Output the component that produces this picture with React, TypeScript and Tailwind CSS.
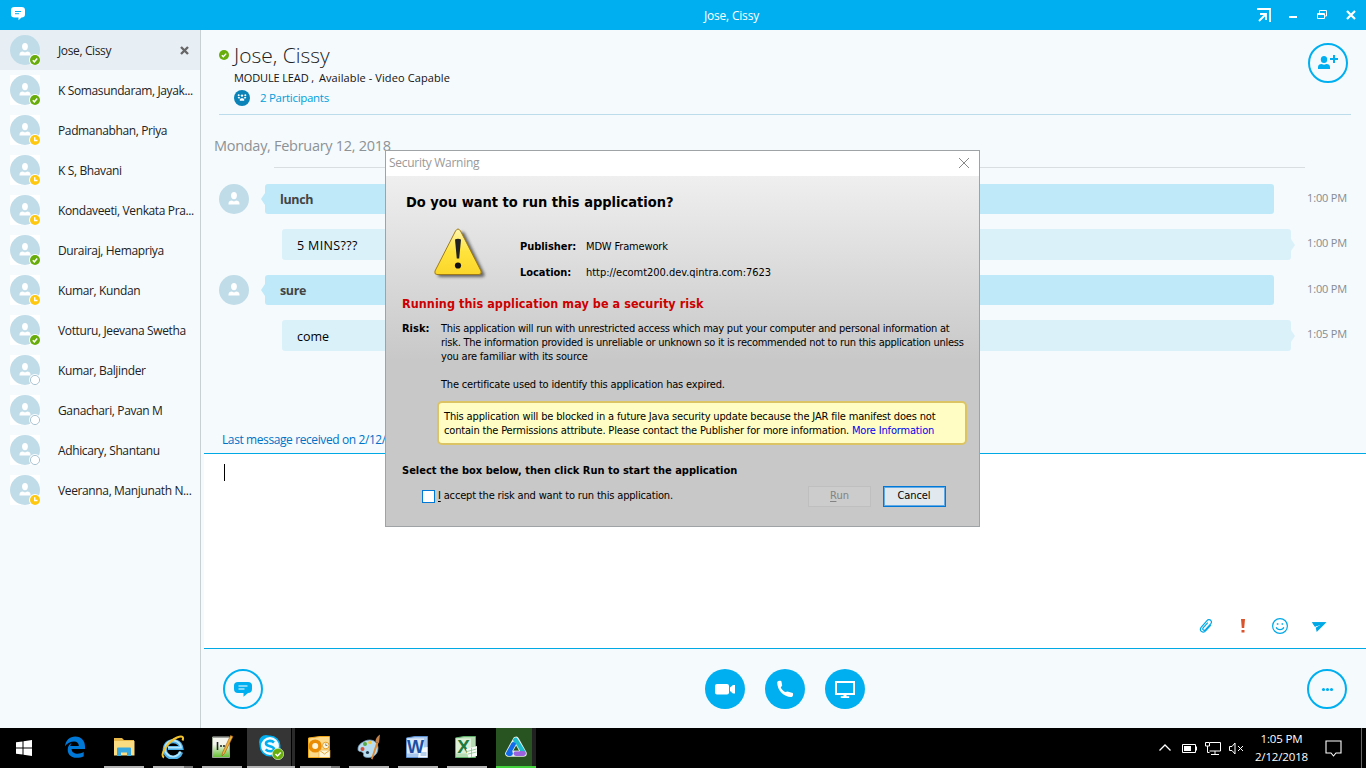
import React from "react";

type Status = "on" | "away" | "off";

const contacts: { name: string; status: Status }[] = [
  { name: "Jose, Cissy", status: "on" },
  { name: "K Somasundaram, Jayak...", status: "on" },
  { name: "Padmanabhan, Priya", status: "away" },
  { name: "K S, Bhavani", status: "away" },
  { name: "Kondaveeti, Venkata Pra...", status: "away" },
  { name: "Durairaj, Hemapriya", status: "on" },
  { name: "Kumar, Kundan", status: "away" },
  { name: "Votturu, Jeevana Swetha", status: "on" },
  { name: "Kumar, Baljinder", status: "off" },
  { name: "Ganachari, Pavan M", status: "off" },
  { name: "Adhicary, Shantanu", status: "off" },
  { name: "Veeranna, Manjunath N...", status: "away" },
];

function Avatar({ status, square }: { status?: Status; square?: boolean }) {
  return (
    <svg width="30" height="30" viewBox="0 0 30 30" className="shrink-0">
      {square && <rect width="30" height="30" fill="#fff" />}
      <circle cx="15" cy="15" r="15" fill="#c0dce8" />
      <ellipse cx="15" cy="11.6" rx="2.9" ry="3.6" fill="#fff" />
      <path d="M9.5 20.5v-1.2c0-1.7 1.4-2.8 3.4-2.8l2.1.9 2.1-.9c2 0 3.4 1.1 3.4 2.8v1.2z" fill="#fff" />
      {status && <circle cx="25" cy="25" r="6" fill="#fff" />}
      {status === "on" && (
        <>
          <circle cx="25" cy="25" r="5" fill="#68ad0c" />
          <path d="M22.8 25.3l1.5 1.5 2.9-3.2" fill="none" stroke="#fff" strokeWidth="1.5" />
        </>
      )}
      {status === "away" && (
        <>
          <circle cx="25" cy="25" r="5" fill="#fdc80f" />
          <path d="M24.7 22.2v3.3h2.8" fill="none" stroke="#fff" strokeWidth="1.4" />
        </>
      )}
      {status === "off" && <circle cx="25" cy="25" r="4.6" fill="#fff" stroke="#a9c4d2" />}
    </svg>
  );
}

function Sidebar() {
  return (
    <aside className="flex w-[201px] shrink-0 flex-col border-r border-[#c9d0d4] bg-[#f5fafd]">
      {contacts.map((c, i) => (
        <div key={c.name} className={i === 0 ? "flex h-10 items-center bg-[#e7eff5] pl-2.5" : "flex h-10 items-center pl-2.5"}>
          <Avatar status={c.status} square={i > 0} />
          <span className="ml-[18px] w-[127px] shrink-0 whitespace-nowrap pt-px text-[12px] tracking-[-0.37px] text-[#222]">{c.name}</span>
          {i === 0 && (
            <svg width="9" height="9" viewBox="0 0 9 9" className="-ml-[5px] shrink-0">
              <path d="M1 1l7 7M8 1L1 8" stroke="#666" strokeWidth="2.4" />
            </svg>
          )}
        </div>
      ))}
    </aside>
  );
}

function TitleBar() {
  return (
    <header className="flex h-[30px] shrink-0 items-center bg-[#00aff0] text-white">
      <svg width="14" height="14" viewBox="0 0 14 14" className="-mt-[3px] ml-[11px]">
        <path d="M3.5 0h7Q14 0 14 3.2v4Q14 10.4 10.5 10.5L7.5 13.2V10.5h-4Q0 10.5 0 7.2v-4Q0 0 3.5 0z" fill="#fff" />
        <path d="M4 4.5h6M4 6.7h4" stroke="#00aff0" />
      </svg>
      <div className="w-[679px]" />
      <div className="flex-1 whitespace-nowrap pt-0.5 text-[12px] tracking-[-0.2px]">Jose, Cissy</div>
      <svg width="109" height="30" viewBox="0 0 109 30" className="shrink-0" fill="none" stroke="#fff">
        <path d="M0 9h13v13M3 14h6v6M9 14l-7 7" strokeWidth="1.8" />
        <path d="M32 17h8" strokeWidth="2" />
        <path d="M60.5 13.5h7v5h-7zM60.5 14.5h7M62.5 13v-2.5h7v5.5h-2" />
        <path d="M90 11l8 8M98 11l-8 8" strokeWidth="2.2" />
      </svg>
    </header>
  );
}

function ChatHeader() {
  return (
    <div className="ml-[18px] mr-[15px] flex h-[85px] shrink-0 border-b border-[#bcdceb]">
      <svg width="10" height="10" viewBox="0 0 10 10" className="mt-5 shrink-0">
        <circle cx="5" cy="5" r="5" fill="#68ad0c" />
        <path d="M2.8 5.3l1.5 1.5 2.9-3.2" fill="none" stroke="#fff" strokeWidth="1.4" />
      </svg>
      <div className="ml-[5px] flex-1 whitespace-nowrap pt-[11px]">
        <div className="h-[29px] text-[21px] font-light leading-[29px] text-[#222]">Jose, Cissy</div>
        <div className="flex h-4 items-center gap-[5px] text-[11px] text-[#111]">
          <span className="tracking-[-0.13px]">MODULE LEAD ,</span>
          <span className="tracking-[0.1px]">Available - Video Capable</span>
        </div>
        <div className="mt-1 flex h-4 items-center">
          <svg width="16" height="16" viewBox="0 0 16 16">
            <circle cx="8" cy="8" r="8" fill="#0a83b8" />
            <g fill="#fff">
              <circle cx="4.7" cy="5.3" r="1" />
              <circle cx="8" cy="5.6" r="1.2" />
              <circle cx="11.3" cy="5.3" r="1" />
              <path d="M3.6 7h2.2v1.5H4.4zM10.2 7h2.2l-.8 1.5h-1.4zM5.8 10.8V9.2l1.2-.9h2l1.2.9v1.600z" />
            </g>
          </svg>
          <span className="ml-2.5 text-[11.5px] tracking-[-0.3px] text-[#009fdb]">2 Participants</span>
        </div>
      </div>
      <svg width="40" height="40" viewBox="0 0 40 40" className="mr-[3px] mt-[13px] shrink-0">
        <circle cx="20" cy="20" r="19" fill="none" stroke="#00aff0" strokeWidth="2" />
        <ellipse cx="16" cy="16.5" rx="3.2" ry="3.6" fill="#00aff0" />
        <path d="M10 26v-2c0-2 1.5-3 3.5-3l2.5.7 2.5-.7c2 0 3.500 1 3.500 3v2z" fill="#00aff0" />
        <path d="M22 16h8M26 12v8" stroke="#00aff0" strokeWidth="2" />
      </svg>
    </div>
  );
}

function Incoming({ text, time }: { text: string; time: string }) {
  return (
    <div className="flex h-[30px] items-center">
      <Avatar />
      <svg width="4" height="12" viewBox="0 0 4 12" className="ml-3">
        <path d="M4 0v12L0 6z" fill="#bfe9f9" />
      </svg>
      <div className="flex h-[30px] w-[1009px] items-center rounded-[3px] bg-[#bfe9f9] pl-[15px] pt-0.5 text-[12.5px] font-bold tracking-[-0.35px] text-[#444]">
        {text}
      </div>
      <span className="ml-[33px] whitespace-nowrap pb-px text-[11px] tracking-[-0.15px] text-[#858c91]">{time}</span>
    </div>
  );
}

function Outgoing({ text, time, wide }: { text: string; time: string; wide?: boolean }) {
  return (
    <div className="flex h-[31px] items-center pl-[63px]">
      <div className="flex h-[31px] w-[1009px] items-center rounded-[3px] bg-[#dbf1fa] pl-[15px] pt-[3px] text-[12.5px] text-black">
        <span className={wide ? "tracking-[0.35px]" : ""}>{text}</span>
      </div>
      <svg width="4" height="12" viewBox="0 0 4 12">
        <path d="M0 0v12L4 6z" fill="#dbf1fa" />
      </svg>
      <span className="ml-3 whitespace-nowrap pb-0.5 text-[11px] tracking-[-0.15px] text-[#858c91]">{time}</span>
    </div>
  );
}

function Conversation() {
  return (
    <div className="flex h-[338px] shrink-0 flex-col pl-[18px]">
      <div className="-ml-[5px] mt-[21px] h-5 whitespace-nowrap text-[14.5px] leading-5 tracking-[-0.29px] text-[#8c9296]">Monday, February 12, 2018</div>
      <div className="ml-[55px] mr-[61px] mt-[11px] h-px bg-[#d9dee1]" />
      <div className="mt-4 flex flex-col gap-[15px]">
        <Incoming text="lunch" time="1:00 PM" />
        <Outgoing text="5 MINS???" time="1:00 PM" wide />
        <Incoming text="sure" time="1:00 PM" />
        <Outgoing text="come" time="1:05 PM" />
      </div>
      <div className="mb-[5px] ml-[3px] mt-auto h-4 whitespace-nowrap text-[12px] leading-4 tracking-[-0.4px] text-[#0072c6]">
        Last message received on 2/12/2018 at 1:05 PM.
      </div>
    </div>
  );
}

function Compose() {
  return (
    <div className="ml-[3px] flex h-[196px] shrink-0 flex-col justify-between border-y border-[#00a8e4] bg-white">
      <div className="ml-5 mt-[10px] h-[17px] w-px bg-black" />
      <div className="mb-[13px] flex h-[18px] items-center justify-end pr-[39px]">
        <svg width="14" height="16" viewBox="0 0 14 16" fill="none" stroke="#00a8e6" strokeWidth="1.2">
          <path d="M11.8 7.2l-5 5.5c-1 1.2-2.6 1.9-4.2.9-1.7-1.3-1.5-3-.5-4.3L8 2.6c1-1.1 2.6-1.3 3.7-.3 1.1 1.1.9 2.5 0 3.6l-5.2 5.7c-.7.7-1.7.8-2.3.2-.6-.6-.5-1.4.1-2.1l4.5-5" />
        </svg>
        <svg width="4" height="14" viewBox="0 0 4 14" className="ml-[28px]" fill="#d9532c">
          <path d="M0 0h4l-.8 9H.8zM.5 11h3v2.5h-3z" />
        </svg>
        <svg width="16" height="16" viewBox="0 0 16 16" className="ml-[27px]" fill="none" stroke="#00a8e6">
          <circle cx="8" cy="8" r="7.4" strokeWidth="1.2" />
          <path d="M4.2 9.3c1 3 6.600 3 7.600 0" strokeWidth="1.2" />
          <path d="M4.8 6h1.6M9.6 6h1.6" strokeWidth="1.6" />
        </svg>
        <svg width="15" height="12" viewBox="0 0 15 12" className="ml-6 mt-px" fill="#00a8e6">
          <path d="M0 1.2h14.5L4.7 11 3.7 6.8 8.5 3.7 2.8 5.5z" />
          <path d="M0 1.2h14.5L3 5.8z" />
        </svg>
      </div>
    </div>
  );
}

function CallBar() {
  return (
    <div className="flex h-[79px] shrink-0 items-center pl-[22px] pr-[19px]">
      <svg width="40" height="40" viewBox="0 0 40 40">
        <circle cx="20" cy="20" r="19" fill="none" stroke="#00aff0" strokeWidth="2" />
        <path d="M15 13h10q4 0 4 3.5V20q0 4-4 4l-4.500 3.800V24H15q-4 0-4-4v-3.500Q11 13 15 13z" fill="#00aff0" />
        <path d="M15.500 17h9M15.500 20h6" stroke="#fff" strokeWidth="1.2" />
      </svg>
      <div className="ml-[442px] flex gap-5">
        <svg width="40" height="40" viewBox="0 0 40 40" fill="#fff">
          <circle cx="20" cy="20" r="20" fill="#00aff0" />
          <rect x="10" y="15" width="14" height="10.5" rx="2" />
          <path d="M25 18.500l3-2.500h2v8.500h-2L25 22z" />
        </svg>
        <svg width="40" height="40" viewBox="0 0 40 40">
          <circle cx="20" cy="20" r="20" fill="#00aff0" />
          <path d="M12.200 13c1-1.200 2.600-1.400 4.200-.8l.8 4.400-1.500 1.800c1.100 2.200 2.800 3.800 5 4.700l1.700-.7 5.400 1.600c.6 1.500.3 3-.8 3.900-7 .8-15-6-14.800-14.900z" fill="#fff" />
        </svg>
        <svg width="40" height="40" viewBox="0 0 40 40">
          <circle cx="20" cy="20" r="20" fill="#00aff0" />
          <path d="M11 13h18v12H11z" fill="none" stroke="#fff" strokeWidth="2" />
          <path d="M18.500 26h3v1.200h2.700V29h-8.400v-1.800h2.700z" fill="#fff" />
        </svg>
      </div>
      <svg width="40" height="40" viewBox="0 0 40 40" className="ml-auto">
        <circle cx="20" cy="20" r="19" fill="none" stroke="#00aff0" strokeWidth="2" />
        <g fill="#00aff0">
          <circle cx="16.5" cy="20.5" r="1.6" />
          <circle cx="20.5" cy="20.5" r="1.6" />
          <circle cx="24.5" cy="20.5" r="1.6" />
        </g>
      </svg>
    </div>
  );
}

function SecurityDialog() {
  return (
    <div className="absolute left-[385px] top-[150px] flex h-[377px] w-[595px] flex-col border border-[#9fa3a5] bg-white text-black">
      <div className="flex h-[25px] shrink-0 items-center justify-between pb-px pl-[3px] pr-[9px] text-[12px] text-[#999]">
        <span className="tracking-[-0.28px]">Security Warning</span>
        <svg width="12" height="12" viewBox="0 0 12 12" stroke="#888">
          <path d="M1 1l10 10M11 1L1 11" />
        </svg>
      </div>
      <div className="flex flex-1 flex-col whitespace-nowrap bg-[linear-gradient(#efefef_0px,#c8c8c8_185px,#c8c8c8_100%)] pl-4 pr-3 font-['DejaVu_Sans_Condensed','DejaVu_Sans',sans-serif] text-[11px] leading-[14px] [font-stretch:condensed]">
        <h1 className="ml-1 mt-4 h-5 text-[14.5px] font-bold leading-5">Do you want to run this application?</h1>
        <div className="mt-4 flex h-[52px]">
          <svg width="54" height="52" viewBox="0 0 54 52" className="ml-8">
            <defs>
              <linearGradient id="warn" x1="0" y1="0" x2="0" y2="1">
                <stop offset="0" stopColor="#fff6b0" />
                <stop offset="0.5" stopColor="#ffe33c" />
                <stop offset="1" stopColor="#fbd62a" />
              </linearGradient>
              <filter id="soft" x="-20%" y="-20%" width="140%" height="140%">
                <feGaussianBlur stdDeviation="1.5" />
              </filter>
            </defs>
            <path d="M26 5q3-3 5 1l19 39q2 4-3 4H7q-4 0-3-3z" fill="#333" opacity="0.7" filter="url(#soft)" />
            <path d="M21.500 3q2.500-4 5 0L47 43q1 3.500-2 3.500H3q-3 0-2-3.500z" fill="url(#warn)" stroke="#a07b16" />
            <path d="M21 11.500q3-1.500 6 0l-1.800 19h-2.400z" fill="#222" />
            <circle cx="24" cy="37.500" r="3.1" fill="#111" />
          </svg>
          <div className="ml-8 flex w-[66px] flex-col gap-3 pt-[12px] font-bold tracking-[-0.05px]">
            <span>Publisher:</span>
            <span>Location:</span>
          </div>
          <div className="flex flex-col gap-3 pt-[12px]">
            <span className="tracking-[-0.15px]">MDW Framework</span>
            <span className="tracking-[-0.03px]">http://ecomt200.dev.qintra.com:7623</span>
          </div>
        </div>
        <div className="mt-[16px] h-4 text-[12.5px] font-bold leading-4 tracking-[0.06px] text-[#cc0000]">Running this application may be a security risk</div>
        <div className="mt-2.5 flex">
          <span className="w-[39px] shrink-0 font-bold">Risk:</span>
          <div className="flex flex-col">
            <span className="tracking-[-0.245px]">This application will run with unrestricted access which may put your computer and personal information at</span>
            <span className="tracking-[-0.245px]">risk. The information provided is unreliable or unknown so it is recommended not to run this application unless</span>
            <span className="tracking-[-0.2px]">you are familiar with its source</span>
            <span className="mt-3.5 tracking-[-0.175px]">The certificate used to identify this application has expired.</span>
          </div>
        </div>
        <div className="ml-[35px] mt-[9px] h-[44px] w-[530px] rounded-[5px] border-2 border-[#dcc464] bg-[#fffdc4] pl-[5px] pt-[7px]">
          <div className="tracking-[-0.155px]">This application will be blocked in a future Java security update because the JAR file manifest does not</div>
          <div className="tracking-[-0.17px]">
            contain the Permissions attribute. Please contact the Publisher for more information. <a className="text-[#0000ee]">More Information</a>
          </div>
        </div>
        <div className="mt-[19px] font-bold">Select the box below, then click Run to start the application</div>
        <div className="mt-[7px] flex h-[22px] items-center pl-5">
          <span className="size-[13px] border border-[#0078d7] bg-white" />
          <span className="ml-[3px] w-[370px] tracking-[-0.17px]">
            <u className="underline-offset-2">I</u> accept the risk and want to run this application.
          </span>
          <button className="h-[21px] w-[63px] border border-[#bfbfbf] bg-[#cccccc] text-[#838383]">
            <u className="underline-offset-2">R</u>un
          </button>
          <button className="ml-3 h-[21px] w-[63px] border border-[#0078d7] bg-[#e1e8ee] pr-px tracking-[-0.1px] shadow-[inset_0_0_0_1px_#62abe6]">
            Cancel
          </button>
        </div>
      </div>
    </div>
  );
}

function TaskItem({ children, split }: { children: React.ReactNode; split?: boolean }) {
  return (
    <div className="ml-[9px] flex h-10 w-10 shrink-0 flex-col">
      <div className="flex h-[38px] items-center justify-center">{children}</div>
      <div className="flex h-0.5">
        <div className="flex-1 bg-[#b5b5b5]" />
        {split && <div className="w-[9px] bg-[#777]" />}
      </div>
    </div>
  );
}

function Taskbar() {
  return (
    <footer className="flex h-10 shrink-0 bg-black text-white">
      <div className="flex w-12 items-center justify-center">
        <svg width="16" height="16" viewBox="0 0 16 16" fill="#fff">
          <path d="M0 2.300L6.500 1.400v6.100H0zM7.500 1.200L16 0v7.500H7.500zM0 8.500h6.500v6.100L0 13.700zM7.500 8.500H16V16l-8.500-1.200z" />
        </svg>
      </div>
      <div className="ml-[7px] flex h-[38px] w-10 items-center justify-center">
        <svg width="20" height="22" viewBox="0 0 20 22" fill="#0078d7">
          <path d="M0 10.200C.8 4 4.800.5 10.200.5 16.500.5 20 5 20 10.500V13H6.500c.2 3.200 2.800 4.700 6 4.700 2.300 0 4.300-.6 6.200-1.700v4.200c-2 1.100-4.400 1.600-7 1.600-5.500 0-9-3.300-9-8.100 0-3.300 1.800-5.900 4.600-7.200C6 7.600 5.500 8.700 5.400 10h8.400c0-3-1.700-4.600-4.800-4.600C5.600 5.400 2 7.200 0 10.200z" />
        </svg>
      </div>
      <TaskItem>
        <svg width="22" height="20" viewBox="0 0 22 20">
          <path d="M1 1h8l2 2h10v15H1z" fill="#e8b84a" />
          <path d="M1 4h20.500v14.500H1z" fill="#fbdc80" />
          <path d="M4 19v-7.500q0-1 1-1h12q1 0 1 1V19h-4v-3.500H8V19z" fill="#38a9e0" />
        </svg>
      </TaskItem>
      <TaskItem split>
        <svg width="24" height="24" viewBox="0 0 24 24" fill="none">
          <path d="M20 17A8.300 8.300 0 1 1 20.300 13H7" stroke="#4fb3e9" strokeWidth="4.2" />
          <path d="M19.500 16.500A8 8 0 1 1 20 12.700H7" stroke="#b5e5fb" strokeWidth="1.8" />
          <path d="M3 22.500C-2 20 7 6.500 16 2.500c5.500-2.200 7-.5 5.500 3" stroke="#f3c330" strokeWidth="2" />
        </svg>
      </TaskItem>
      <TaskItem>
        <svg width="24" height="26" viewBox="0 0 24 26">
          <defs>
            <linearGradient id="pad" x1="0" y1="0" x2="0" y2="1">
              <stop offset="0.35" stopColor="#f4f6ee" />
              <stop offset="1" stopColor="#5fbf2c" />
            </linearGradient>
          </defs>
          <path d="M2.500 3h17v20.500h-17z" fill="url(#pad)" stroke="#9ba693" />
          <path d="M3.500 3h15" stroke="#777" strokeDasharray="1 1" strokeWidth="2" />
          <path d="M7.500 8v8" stroke="#222" strokeWidth="1.6" />
          <path d="M10 12h7" stroke="#222" strokeWidth="1.6" strokeDasharray="2 1" />
          <path d="M20.500 1.500l2.500 1-8.500 17-2.500 2.500.5-3.500z" fill="#f0b232" stroke="#9a5a25" strokeWidth="0.6" />
        </svg>
      </TaskItem>
      <div className="ml-[5px] flex h-10 w-12 shrink-0 flex-col bg-[#2a2a2a]">
        <div className="flex h-[38px] w-[45px] items-center justify-center border-r border-black bg-[#353535] pl-1">
          <svg width="26" height="26" viewBox="0 0 26 26">
            <circle cx="8" cy="8" r="7" fill="#00aff0" />
            <circle cx="15.500" cy="15.500" r="7" fill="#00aff0" />
            <circle cx="12" cy="12" r="9.700" fill="#f4fbff" stroke="#00aff0" strokeWidth="1.5" />
            <path d="M16 8.500C13.500 6 8 6.500 8 9.500c0 3.500 8 2 8 5.500 0 3-6 3-8.300.3" fill="none" stroke="#00aff0" strokeWidth="2.6" />
            <circle cx="20" cy="20" r="5.700" fill="#68ad0c" stroke="#d9f2c1" strokeWidth="0.7" />
            <path d="M17.500 20l2 2 3.200-3.600" fill="none" stroke="#fff" strokeWidth="1.5" />
          </svg>
        </div>
        <div className="h-0.5 bg-[#b5b5b5]" />
      </div>
      <div className="-ml-1 flex">
        <TaskItem split>
          <svg width="24" height="24" viewBox="0 0 24 24" className="-translate-x-px">
            <path d="M1.500 3L13 1.500h9.500v21h-21z" fill="#fdd98a" stroke="#f2a71b" />
            <circle cx="8.200" cy="11" r="4.800" fill="#fff6dc" stroke="#e98c06" strokeWidth="3.6" />
            <path d="M12 15h11v7.500H12z" fill="#fff6d8" stroke="#e6a52c" strokeWidth="0.6" />
            <path d="M12 15l5.500 4 5.500-4" fill="none" stroke="#dc951b" strokeWidth="0.8" />
            <circle cx="18.800" cy="10.500" r="3.300" fill="#fdf5db" stroke="#e1a12c" />
            <path d="M18.800 8.500v2h1.600" stroke="#777" fill="none" strokeWidth="0.9" />
          </svg>
        </TaskItem>
        <TaskItem>
          <svg width="26" height="26" viewBox="0 0 26 26">
            <path d="M9 7c7-3 13 1 13 7 0 7-6 11-13 9-3-1 0-4-3-5-2-1-4 0-4-3 0-4 3-6 7-8z" fill="#b9ddf0" stroke="#7199b5" strokeWidth="0.8" />
            <circle cx="6.500" cy="15" r="2" fill="#d64d3a" />
            <circle cx="9" cy="10" r="2" fill="#58aa45" />
            <circle cx="14" cy="8.500" r="1.800" fill="#f0c63a" />
            <circle cx="11.500" cy="18.500" r="1.600" fill="#203a50" />
            <path d="M20.500 8l2 .8-6 16.700-1.500-.7z" fill="#dc8a35" />
            <path d="M19.500 8q0-5 4.500-7.500L23 9z" fill="#c2834d" />
          </svg>
        </TaskItem>
        <TaskItem>
          <svg width="24" height="24" viewBox="0 0 24 24" className="-translate-x-px">
            <path d="M1.500 3L10 1.500h12.500v21h-21z" fill="#a9c8ee" stroke="#5c8fd0" />
            <path d="M2 3.500h17v15H2z" fill="#dbe8f8" />
            <path d="M15 13l7.500-1v10.500H13z" fill="#f7fafe" />
            <text x="10.500" y="17.500" textAnchor="middle" fontFamily="Liberation Sans" fontWeight="bold" fontSize="18" fill="#1b4fa3">
              W
            </text>
            <path d="M15.500 18h6M15.500 20h6" stroke="#5c8fd0" strokeWidth="0.8" />
          </svg>
        </TaskItem>
        <TaskItem>
          <svg width="24" height="24" viewBox="0 0 24 24" className="-translate-x-px">
            <path d="M1.500 3L10 1.500h11.500v21h-20z" fill="#b5dcb3" stroke="#5eae6a" />
            <path d="M2 3.500h15v15H2z" fill="#dcf0d8" />
            <text x="9.500" y="17.500" textAnchor="middle" fontFamily="Liberation Sans" fontWeight="bold" fontSize="19" fill="#1f7a3d">
              X
            </text>
            <path d="M12 14l11-3v10l-8.500 1.500z" fill="#f7fbf5" />
            <path d="M13 16.500l9.500-2.500M14 19l8.500-2M17.500 13v9" stroke="#7dbb82" strokeWidth="0.7" />
          </svg>
        </TaskItem>
        <div className="ml-[9px] flex h-10 w-10 flex-col bg-[#202020]">
          <div className="flex h-[38px] w-9 items-center justify-center bg-[#285422] pl-1">
            <svg width="24" height="22" viewBox="0 0 24 22" fill="none" strokeLinecap="round" strokeLinejoin="round">
              <path d="M12 4L4.500 17.500h15z" stroke="#e8f2ec" strokeWidth="6.6" />
              <path d="M11.500 4L19 16" stroke="#1dbccc" strokeWidth="4.8" />
              <path d="M12 17.500h7.500" stroke="#9c63df" strokeWidth="4.8" />
              <path d="M9.500 8.500L4.500 17.500h2" stroke="#126bea" strokeWidth="4.8" />
              <path d="M12 9l-3.300 6h6.600z" fill="#285422" stroke="#e8f2ec" strokeWidth="0.8" />
            </svg>
          </div>
          <div className="h-0.5 bg-[#43d33d]" />
        </div>
      </div>
      <div className="ml-auto flex items-center">
        <svg width="90" height="20" viewBox="0 0 90 20" fill="none" stroke="#fff">
          <path d="M1.500 12.500L7 7l5.500 5.500" strokeWidth="1.3" />
          <path d="M24.500 6.500h13v8h-13zM38.500 8.500v4" />
          <path d="M26 8h7v5h-7z" fill="#fff" stroke="none" />
          <path d="M52 4.500h10.500v8.500h-11M47.500 4.500h4v3.500h-4zM49.500 8v6.500h2M57 13v3M53 16.500h8" />
          <path d="M71.500 8.500h2.500l3-3.500v11l-3-3.500h-2.500zM80 8l5 5M85 8l-5 5" />
        </svg>
        <div className="ml-[3px] w-[61px] whitespace-nowrap text-center text-[11.5px] leading-[18px] tracking-[-0.15px]">
          <div>1:05 PM</div>
          <div>2/12/2018</div>
        </div>
        <svg width="17" height="17" viewBox="0 0 17 17" className="ml-[13px]" fill="none" stroke="#fff" strokeWidth="1.1">
          <path d="M1 1h15v12h-5l-2.500 3L6 13H1z" />
        </svg>
        <div className="ml-[19px] mr-1 h-10 w-px bg-[#666]" />
      </div>
    </footer>
  );
}

export default function App() {
  return (
    <div className="relative flex h-[768px] w-[1366px] flex-col overflow-hidden bg-[#f5fafd] font-['Open_Sans','Noto_Sans',sans-serif]">
      <TitleBar />
      <div className="flex h-[698px] shrink-0">
        <Sidebar />
        <main className="flex min-w-0 flex-1 flex-col">
          <ChatHeader />
          <Conversation />
          <Compose />
          <CallBar />
        </main>
      </div>
      <Taskbar />
      <SecurityDialog />
    </div>
  );
}
